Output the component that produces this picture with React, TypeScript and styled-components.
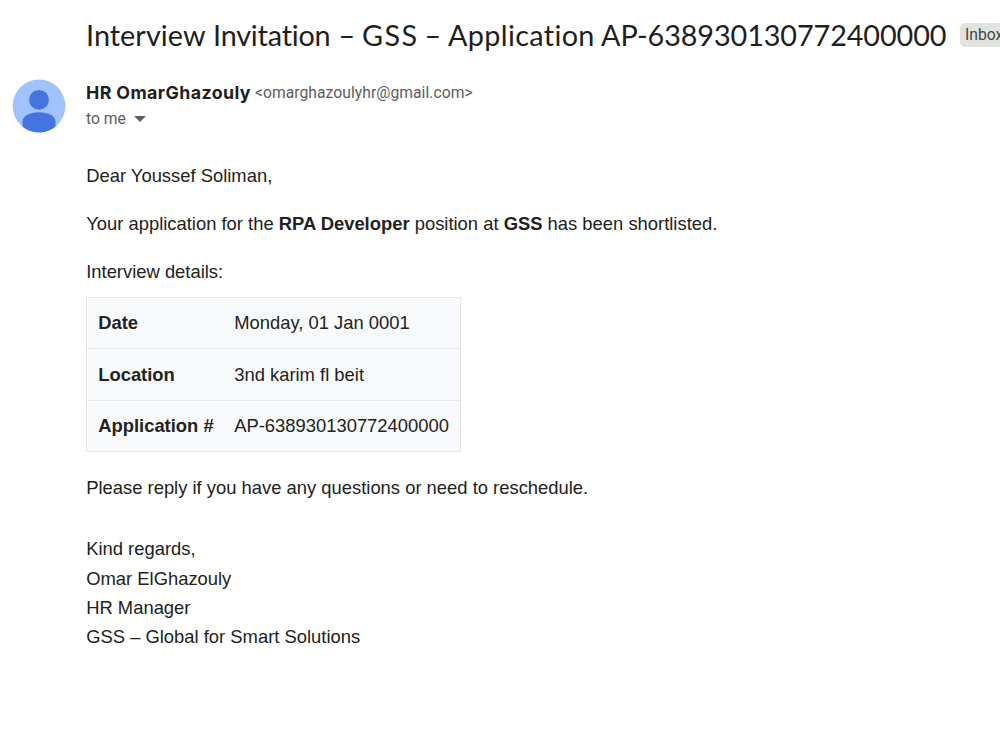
import React from 'react';
import styled, { createGlobalStyle } from 'styled-components';

const GlobalStyle = createGlobalStyle`
  * { box-sizing: border-box; }
  body { margin: 0; background: #fff; overflow: hidden; }
`;

const Page = styled.main`
  width: 1000px;
  height: 750px;
  overflow: hidden;
  background: #fff;
  color: #222;
  font-family: 'Liberation Sans', Arial, sans-serif;
`;

const SubjectRow = styled.header`
  display: flex;
  align-items: center;
  height: 36px;
  margin-top: 17px;
  padding-left: 86px;
  white-space: nowrap;
`;

const Subject = styled.h1`
  display: flex;
  flex: none;
  width: 874px;
  margin: 0;
  color: #1f1f1f;
  font: 400 28.8px/36px Lato, sans-serif;
  font-variant-ligatures: none;
`;

const Word = styled.span<{ $width: number; $tracking?: number }>`
  flex: none;
  width: ${(p) => p.$width}px;
  letter-spacing: ${(p) => p.$tracking ?? 0}px;
`;

const FolderChip = styled.span`
  flex: none;
  height: 24px;
  padding: 0 5px;
  border-radius: 5px;
  background: #e1e3e1;
  color: #444746;
  font: 400 15.7px/23px Roboto, sans-serif;
`;

const SenderRow = styled.section`
  display: flex;
  margin-top: 26px;
  padding-left: 12px;
  height: 54px;
`;

const Avatar = styled.svg`
  flex: none;
  width: 54px;
  height: 54px;
`;

const SenderInfo = styled.div`
  margin-left: 20px;
  color: #5e5e5e;
  font: 400 15.7px/26px Roboto, sans-serif;
  white-space: nowrap;
`;

const SenderLine = styled.div`
  display: flex;
  height: 27px;
`;

const SenderName = styled.strong`
  width: 169px;
  color: #1f1f1f;
  font: 700 17.8px/27px Inter, sans-serif;
  letter-spacing: 0.4px;
`;

const Address = styled.span`
  letter-spacing: 0.03px;
  line-height: 28px;
`;

const Recipient = styled.div`
  display: flex;
  align-items: center;
  gap: 8px;
`;

const Caret = styled.span`
  border: solid transparent;
  border-width: 6px 6px 0;
  border-top-color: #5e5e5e;
`;

const Body = styled.article`
  padding: 28px 0 0 86.2px;
  font-size: 18.4px;
  line-height: 29.4px;
  white-space: nowrap;
`;

const Paragraph = styled.p`
  margin: 0 0 18.5px;
`;

const DetailsTitle = styled.p`
  margin: 0 0 10.6px;
`;

const Details = styled.table`
  width: 374.5px;
  border-collapse: collapse;
  background: #f9fafc;
  border: 1px solid #e5e7eb;
`;

const DetailRow = styled.tr`
  height: 51.5px;
  border-bottom: 1px solid #e5e7eb;
`;

const Label = styled.th`
  width: 136.5px;
  padding: 0 0 0 11px;
  text-align: left;
`;

const Value = styled.td`
  padding: 0 0 0 11px;
`;

const Closing = styled.p`
  margin: 21px 0 31.4px;
`;

const Signature = styled.address`
  font-style: normal;
`;

const subject = [
  { text: 'Interview', width: 127, tracking: 0.05 },
  { text: 'Invitation', width: 125.5, tracking: -0.2 },
  { text: '–', width: 23.5, tracking: 0 },
  { text: 'GSS', width: 62.5, tracking: 1.4 },
  { text: '–', width: 23.5, tracking: 0 },
  { text: 'Application', width: 153, tracking: 0.35 },
  { text: 'AP-638930130772400000', width: 345, tracking: -0.1 },
];

const details = [
  ['Date', 'Monday, 01 Jan 0001'],
  ['Location', '3nd karim fl beit'],
  ['Application #', 'AP-638930130772400000'],
];

export default function App() {
  return (
    <>
      <GlobalStyle />
      <Page>
        <SubjectRow>
          <Subject>
            {subject.map((word, i) => (
              <Word key={i} $width={word.width} $tracking={word.tracking}>{word.text}</Word>
            ))}
          </Subject>
          <FolderChip>Inbox</FolderChip>
        </SubjectRow>
        <SenderRow>
          <Avatar viewBox="0 0 54 54">
            <defs>
              <clipPath id="disc"><circle cx="27" cy="27" r="26.4" /></clipPath>
            </defs>
            <circle cx="27" cy="27" r="26.4" fill="#a0c3ff" />
            <g clipPath="url(#disc)" fill="#4374e0">
              <circle cx="27" cy="20.8" r="9.9" />
              <path d="M10.5 56V42.5c0-5.5 7.500-9.200 16.500-9.200s16.500 3.700 16.500 9.200V56z" />
            </g>
          </Avatar>
          <SenderInfo>
            <SenderLine>
              <SenderName>HR OmarGhazouly</SenderName>
              <Address>&lt;omarghazoulyhr@gmail.com&gt;</Address>
            </SenderLine>
            <Recipient>to me <Caret /></Recipient>
          </SenderInfo>
        </SenderRow>
        <Body>
          <Paragraph>Dear Youssef Soliman,</Paragraph>
          <Paragraph>
            Your application for the <b>RPA Developer</b> position at <b>GSS</b> has been shortlisted.
          </Paragraph>
          <DetailsTitle>Interview details:</DetailsTitle>
          <Details>
            <tbody>
              {details.map(([label, value]) => (
                <DetailRow key={label}>
                  <Label scope="row">{label}</Label>
                  <Value>{value}</Value>
                </DetailRow>
              ))}
            </tbody>
          </Details>
          <Closing>Please reply if you have any questions or need to reschedule.</Closing>
          <Signature>
            Kind regards,<br />
            Omar ElGhazouly<br />
            HR Manager<br />
            GSS – Global for Smart Solutions
          </Signature>
        </Body>
      </Page>
    </>
  );
}
